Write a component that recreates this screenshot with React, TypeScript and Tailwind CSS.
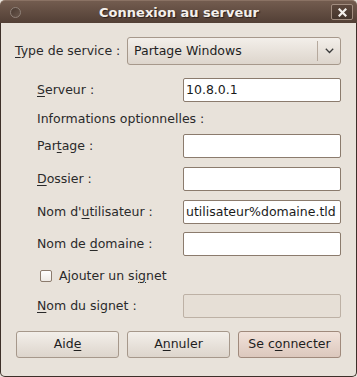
import React from "react";

const font = { fontFamily: '"DejaVu Sans", Verdana, sans-serif' };

function U({ children }: { children: React.ReactNode }) {
  return <span className="underline underline-offset-2 decoration-1">{children}</span>;
}

function Entry({ value, disabled }: { value?: string; disabled?: boolean }) {
  return (
    <div
      className={
        "w-[158px] h-[24px] rounded-[2px] border flex items-center px-[2px] text-[12.5px] text-[#1a1a1a] " +
        (disabled ? "bg-[#e6dfd6] border-[#bdb1a5]" : "bg-white border-[#8b7b6d]")
      }
    >
      {value}
    </div>
  );
}

function Row({ label, value, disabled, mt }: { label: React.ReactNode; value?: string; disabled?: boolean; mt: string }) {
  return (
    <div className={"flex items-center " + mt}>
      <div className="w-[168px] pl-[22px] text-[12.5px] text-[#2a2a2a]">{label}</div>
      <Entry value={value} disabled={disabled} />
    </div>
  );
}

function Button({ children, def }: { children: React.ReactNode; def?: boolean }) {
  return (
    <div
      className={
        "w-[103px] h-[27px] rounded-[3px] border flex items-center justify-center text-[12.5px] text-[#1e1e1e] " +
        (def
          ? "border-[#a08a7c] bg-gradient-to-b from-[#f1e2da] to-[#dcc8bd]"
          : "border-[#a6988b] bg-gradient-to-b from-[#f3efea] to-[#ddd5cc]")
      }
    >
      {children}
    </div>
  );
}

export default function App() {
  return (
    <div className="w-[357px] h-[377px] bg-[#e8e2da] relative" style={font}>
      <div className="w-[357px] h-[377px] flex flex-col">
        {/* Title bar */}
        <div className="h-[23px] rounded-t-[5px] bg-gradient-to-b from-[#735c4f] to-[#523f35] flex items-center relative border-t border-[#8a7264]">
          <div className="ml-[10px] w-[11px] h-[11px] rounded-full border border-[#8f8178] bg-gradient-to-br from-[#4a3a31] to-[#6a574c]" />
          <div
            className="flex-1 text-center text-[13px] font-bold text-[#f4f0ec] pl-[6px] leading-none"
            style={{ textShadow: "1px 1px 1px #2a1f1a" }}
          >
            Connexion au serveur
          </div>
          <div className="mr-[4px] w-[22px] h-[16px] rounded-[2px] border border-[#a28d80] bg-gradient-to-b from-[#5c473c] to-[#45352c] flex items-center justify-center">
            <svg width="9" height="9" viewBox="0 0 9 9">
              <path d="M1.5 1.5 L7.5 7.5 M7.5 1.5 L1.5 7.5" stroke="#f4f0ec" strokeWidth="2.2" strokeLinecap="square" />
            </svg>
          </div>
        </div>
        {/* Body */}
        <div className="flex-1 border-l border-r border-b border-[#3d3029] rounded-b-[5px] flex flex-col pl-[14px] text-[#2a2a2a]">
          <div className="flex items-center mt-[14px]">
            <div className="w-[112px] text-[12.5px]">
              <U>T</U>ype de service :
            </div>
            <div className="w-[214px] h-[28px] rounded-[3px] border border-[#a6988b] bg-gradient-to-b from-[#f3efea] to-[#ddd5cc] flex items-center">
              <div className="flex-1 pl-[6px] text-[12.5px] text-[#1e1e1e]">Partage Windows</div>
              <div className="w-px h-[20px] bg-[#b6a99d]" />
              <div className="w-[22px] flex items-center justify-center">
                <svg width="9" height="6" viewBox="0 0 9 6">
                  <path d="M0.8 0.8 L4.5 4.5 L8.2 0.8" stroke="#3a3a3a" strokeWidth="1.3" fill="none" />
                </svg>
              </div>
            </div>
          </div>
          <Row mt="mt-[13px]" label={<><U>S</U>erveur :</>} value="10.8.0.1" />
          <div className="mt-[9px] pl-[22px] h-[16px] flex items-center text-[12.5px]">Informations optionnelles :</div>
          <Row mt="mt-[7px]" label={<>Par<U>t</U>age :</>} />
          <Row mt="mt-[9px]" label={<><U>D</U>ossier :</>} />
          <Row mt="mt-[9px]" label={<>Nom d'<U>u</U>tilisateur :</>} value="utilisateur%domaine.tld" />
          <Row mt="mt-[8px]" label={<>Nom de <U>d</U>omaine :</>} />
          <div className="mt-[12px] h-[16px] flex items-center pl-[25px] text-[12.5px]">
            <div className="w-[12px] h-[12px] rounded-[2px] border border-[#8b7b6d] bg-gradient-to-b from-[#ffffff] to-[#efebe6]" />
            <div className="ml-[7px]">
              Ajouter un si<U>g</U>net
            </div>
          </div>
          <Row mt="mt-[10px]" disabled label={<><U>N</U>om du signet :</>} />
          <div className="mt-[13px] flex gap-[8px] pl-[1px]">
            <Button>
              Aid<U>e</U>
            </Button>
            <Button>
              A<U>n</U>nuler
            </Button>
            <Button def>
              Se c<U>o</U>nnecter
            </Button>
          </div>
        </div>
      </div>
    </div>
  );
}
